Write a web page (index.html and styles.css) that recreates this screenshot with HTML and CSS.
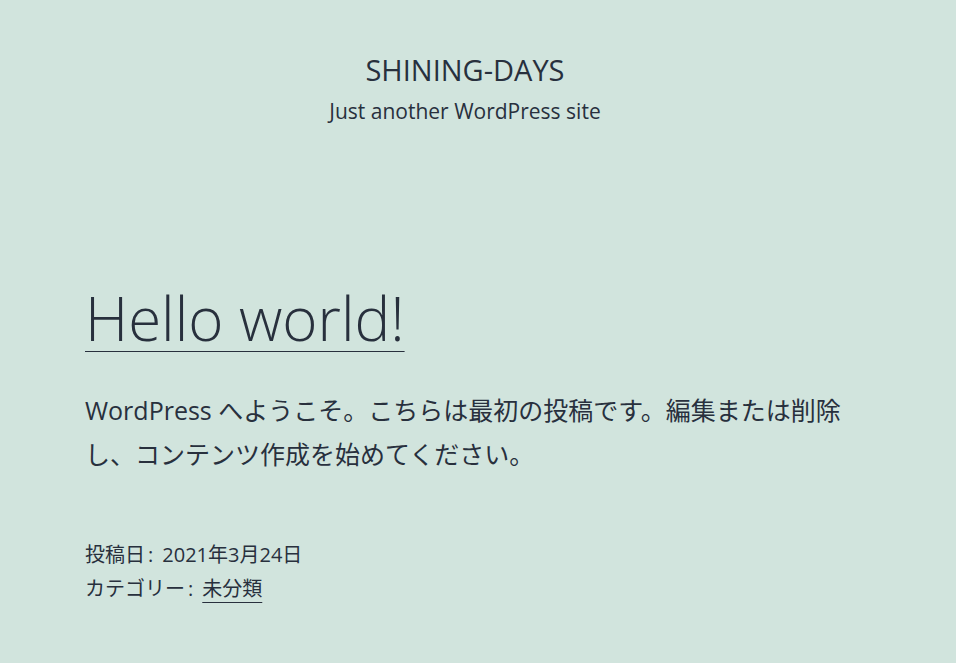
FILE: index.html
```html
<!DOCTYPE html>
<html lang="ja">
<head>
<meta charset="utf-8">
<title>SHINING-DAYS</title>
<link rel="stylesheet" href="styles.css">
</head>
<body>
<header class="site-header">
  <p class="site-title">SHINING-DAYS</p>
  <p class="site-description">Just another WordPress site</p>
</header>
<main class="site-main">
  <article class="post">
    <h2 class="entry-title"><a href="#">Hello world!</a></h2>
    <div class="entry-content">
      <p>WordPress へようこそ。こちらは最初の投稿です。編集または削除し、コンテンツ作成を始めてください。</p>
    </div>
    <footer class="entry-footer">
      <div class="meta-line">投稿日<span class="colon">:</span>2021年3月24日</div>
      <div class="meta-line">カテゴリー<span class="colon">:</span><a href="#">未分類</a></div>
    </footer>
  </article>
</main>
</body>
</html>
```

FILE: styles.css
```css
html, body {
  margin: 0;
  padding: 0;
}
body {
  background: #d1e4dd;
  color: #28303d;
  font-family: "Open Sans", "Noto Sans CJK JP", sans-serif;
}
a {
  color: #28303d;
  text-decoration: underline;
  text-underline-offset: 6px;
  text-decoration-thickness: 1px;
}
.site-header {
  padding: 52px 26px 0 0;
  text-align: center;
}
.site-title {
  margin: 0;
  font-size: 29px;
  line-height: 36px;
}
.site-description {
  margin: 8px 0 0;
  font-size: 21px;
  line-height: 30px;
}
.site-main {
  padding: 154px 85px 0;
}
.post {
  max-width: 775px;
}
.entry-title {
  margin: 0;
  font-size: 60px;
  font-weight: 300;
  line-height: 76px;
}
.entry-title a {
  text-underline-offset: 10px;
}
.entry-content {
  margin-top: 32px;
  font-size: 25px;
  line-height: 44px;
}
.entry-content p {
  margin: 0;
}
.entry-footer {
  margin-top: 62px;
  font-size: 20px;
  line-height: 34px;
}
.colon {
  margin: 0 9px 0 3px;
}
```
